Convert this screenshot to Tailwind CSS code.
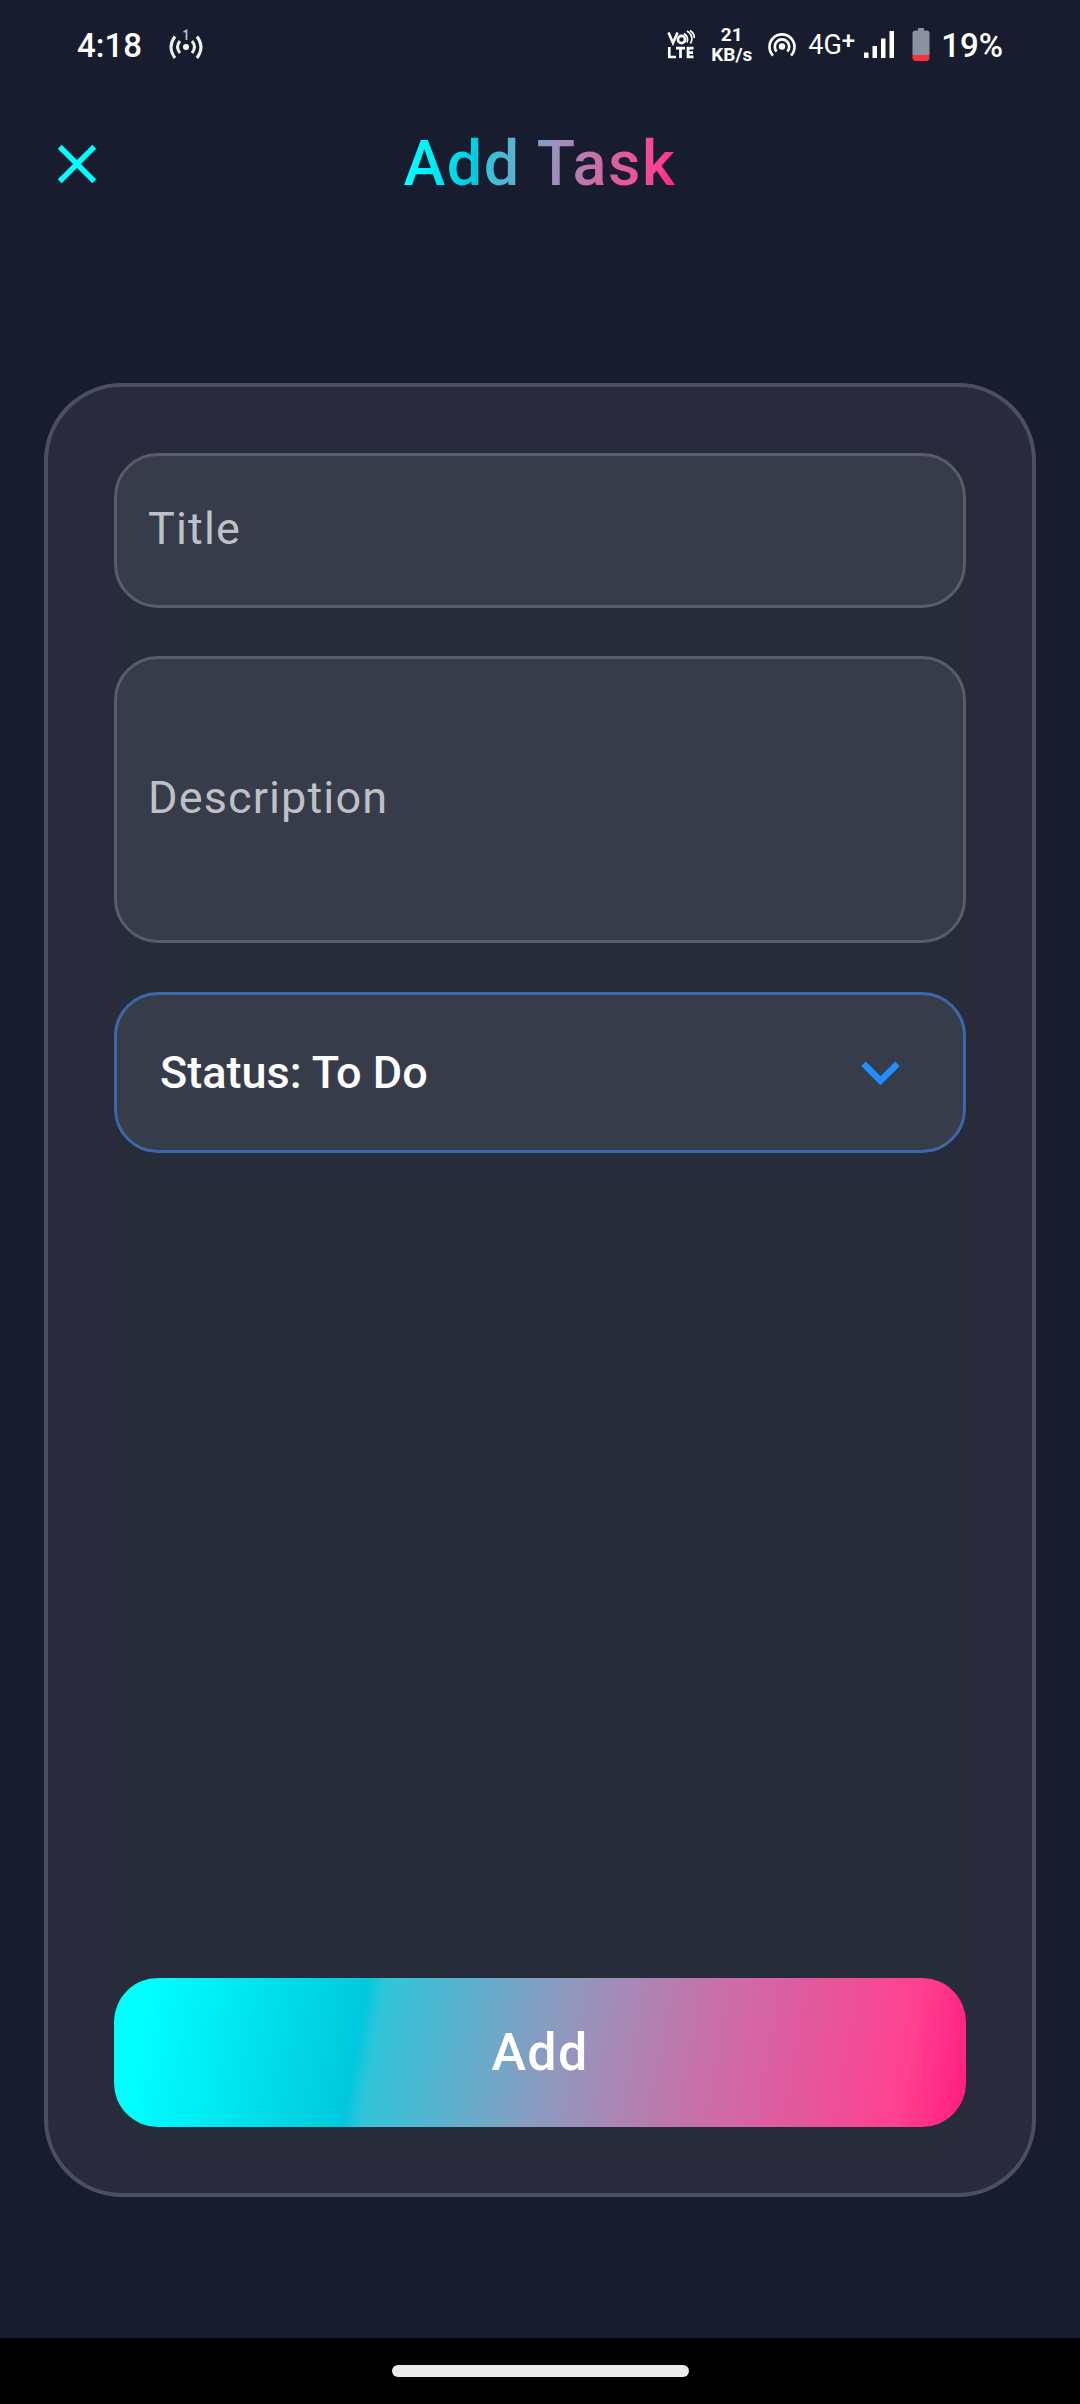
<!DOCTYPE html>
<html lang="en">
<head>
<meta charset="utf-8">
<meta name="viewport" content="width=device-width, initial-scale=1">
<title>Add Task</title>
<script src="https://cdn.jsdelivr.net/npm/@tailwindcss/browser@4"></script>
</head>
<body class="flex min-h-screen flex-col bg-[#171d2f] font-['Roboto',sans-serif] text-white">

  <!-- System status bar -->
  <div class="flex h-[90px] items-center justify-between px-[77px] font-medium">
    <div class="flex items-center gap-[26px]">
      <span class="text-[33px] leading-none">4:18</span>
      <svg class="h-8 w-9" viewBox="0 0 36 32" fill="none" stroke="#f1f1f4" stroke-width="3" aria-hidden="true">
        <path d="M7 7.500Q-1 18 7 29M29 7.500Q37 18 29 29M12 12Q7 18 12 24M24 12Q29 18 24 24"/>
        <circle cx="18" cy="18" r="3" fill="#fff" stroke="none"/>
        <path d="M15.500 3l3-1.500V11" stroke="#b9bbc4" stroke-width="1.800"/>
      </svg>
    </div>
    <div class="flex items-center">
      <svg class="h-8 w-7" viewBox="0 0 28 32" fill="none" stroke="#fff" stroke-width="2.600" aria-hidden="true">
        <path d="M1.500 3.500l4.500 10.500L10.500 3.500"/>
        <circle cx="14.500" cy="10.500" r="3.600"/>
        <path d="M17 4.500Q22 8 20 13.500M20 2Q27.500 7 23.500 14.500M23 1.500Q28 5 27 9" stroke-width="1.700"/>
        <path d="M2.300 18v10H9M9 19.200h9M13.500 19.200V29M26.500 19.200h-5.500v8.600h5.500M21 23.600h5" stroke-width="2.700"/>
      </svg>
      <div class="ml-4 text-center text-[19px] leading-5 font-bold"><div>21</div><div>KB/s</div></div>
      <svg class="ml-4 h-7 w-7" viewBox="0 0 28 28" fill="none" stroke="#fff" stroke-width="2.700" aria-hidden="true">
        <path d="M5 24.500A12.500 12.500 0 1 1 23 24.500M8.700 20.500A7.200 7.200 0 1 1 19.300 20.500"/>
        <circle cx="14" cy="15.500" r="3.200" fill="#fff" stroke="none"/>
      </svg>
      <div class="ml-3 flex items-start text-[27px] leading-8 font-normal"><span>4G</span><span class="text-[24px] leading-6 font-medium">+</span></div>
      <svg class="ml-2 h-7 w-8" viewBox="0 0 32 28" fill="#fff" aria-hidden="true">
        <path d="M1 21.500h4.500V27H1zM9.500 15H14v12H9.500zM18 7.500h4.500V27H18zM26.500 0H31v27h-4.500z"/>
      </svg>
      <svg class="ml-4 h-9 w-5" viewBox="0 0 20 36" aria-hidden="true">
        <path d="M7 1h6v2.500h2.500q3 0 3 3V28h-17V6.500q0-3 3-3H7z" fill="#8d909e"/>
        <path d="M1.500 28h17v2.500q0 3.500-3.500 3.500H5q-3.500 0-3.500-3.500z" fill="#ff2d3b"/>
      </svg>
      <span class="ml-2.5 text-[33px] leading-none">19%</span>
    </div>
  </div>

  <!-- App bar -->
  <header class="grid h-[148px] grid-cols-[1fr_auto_1fr] items-center px-11">
    <button type="button" aria-label="Close" class="h-[66px] w-[66px] text-[#00ffff]">
      <svg class="h-full w-full" viewBox="0 0 24 24" fill="currentColor"><path d="M19 6.410 17.590 5 12 10.590 6.410 5 5 6.410 10.590 12 5 17.590 6.410 19 12 13.410 17.590 19 19 17.590 13.410 12z"/></svg>
    </button>
    <h1 class="bg-[linear-gradient(100deg,#00ffff_4%,#00c8de_29%,#30c5da_31%,#9496bd_53%,#c870a8_69%,#ff4090_92%,#ff1c80)] bg-clip-text text-[63px] leading-[76px] font-medium tracking-wide text-transparent">Add Task</h1>
  </header>

  <main class="flex flex-1 flex-col px-11 pt-[145px] pb-[141px]">
    <div class="flex flex-1 flex-col rounded-[78px] border-4 border-[#4c4f60] bg-[#292b3d] px-[66px] pt-[66px] pb-11">
      <form class="flex flex-1 flex-col rounded-b-[56px] bg-[linear-gradient(#292b3d_78px,#262c39_78px)] pb-[22px]">
        <input type="text" aria-label="Title" placeholder="Title" class="h-[155px] w-full rounded-[44px] border-3 border-[#5a5c6b] bg-[#373c4a] px-[31px] pb-1 text-[45px] tracking-wide placeholder:text-[#bfc0c6]">
        <textarea aria-label="Description" placeholder="Description" class="mt-12 h-[287px] w-full resize-none rounded-[44px] border-3 border-[#5a5c6b] bg-[#373c4a] px-[31px] pt-[113px] text-[45px] leading-[52px] tracking-wide placeholder:text-[#bfc0c6]"></textarea>
        <div class="relative mt-[49px]">
          <select aria-label="Status" class="h-[161px] w-full appearance-none rounded-[44px] border-3 border-[#3a68a8] bg-[#373c4a] px-[43px] text-[45px] font-medium">
            <option>Status: To Do</option>
            <option>Status: In Progress</option>
            <option>Status: Done</option>
          </select>
          <svg class="pointer-events-none absolute inset-y-0 right-[47px] my-auto h-[77px] w-[77px] text-[#1e90ff]" viewBox="0 0 24 24" fill="currentColor" aria-hidden="true"><path d="M7.410 8.590 12 13.170l4.590-4.580L18 10l-6 6-6-6z"/></svg>
        </div>
        <button type="submit" class="mt-auto h-[149px] w-full rounded-[44px] bg-[linear-gradient(100deg,#00ffff_4%,#00c8de_29%,#30c5da_31%,#9496bd_53%,#c870a8_69%,#ff4090_92%,#ff1c80)] text-[52px] font-medium tracking-wide">Add</button>
      </form>
    </div>
  </main>

  <!-- Gesture navigation bar -->
  <div class="flex h-[66px] justify-center bg-black pt-[27px]">
    <div class="h-3 w-[297px] rounded-full bg-[#ebebeb]"></div>
  </div>
</body>
</html>
